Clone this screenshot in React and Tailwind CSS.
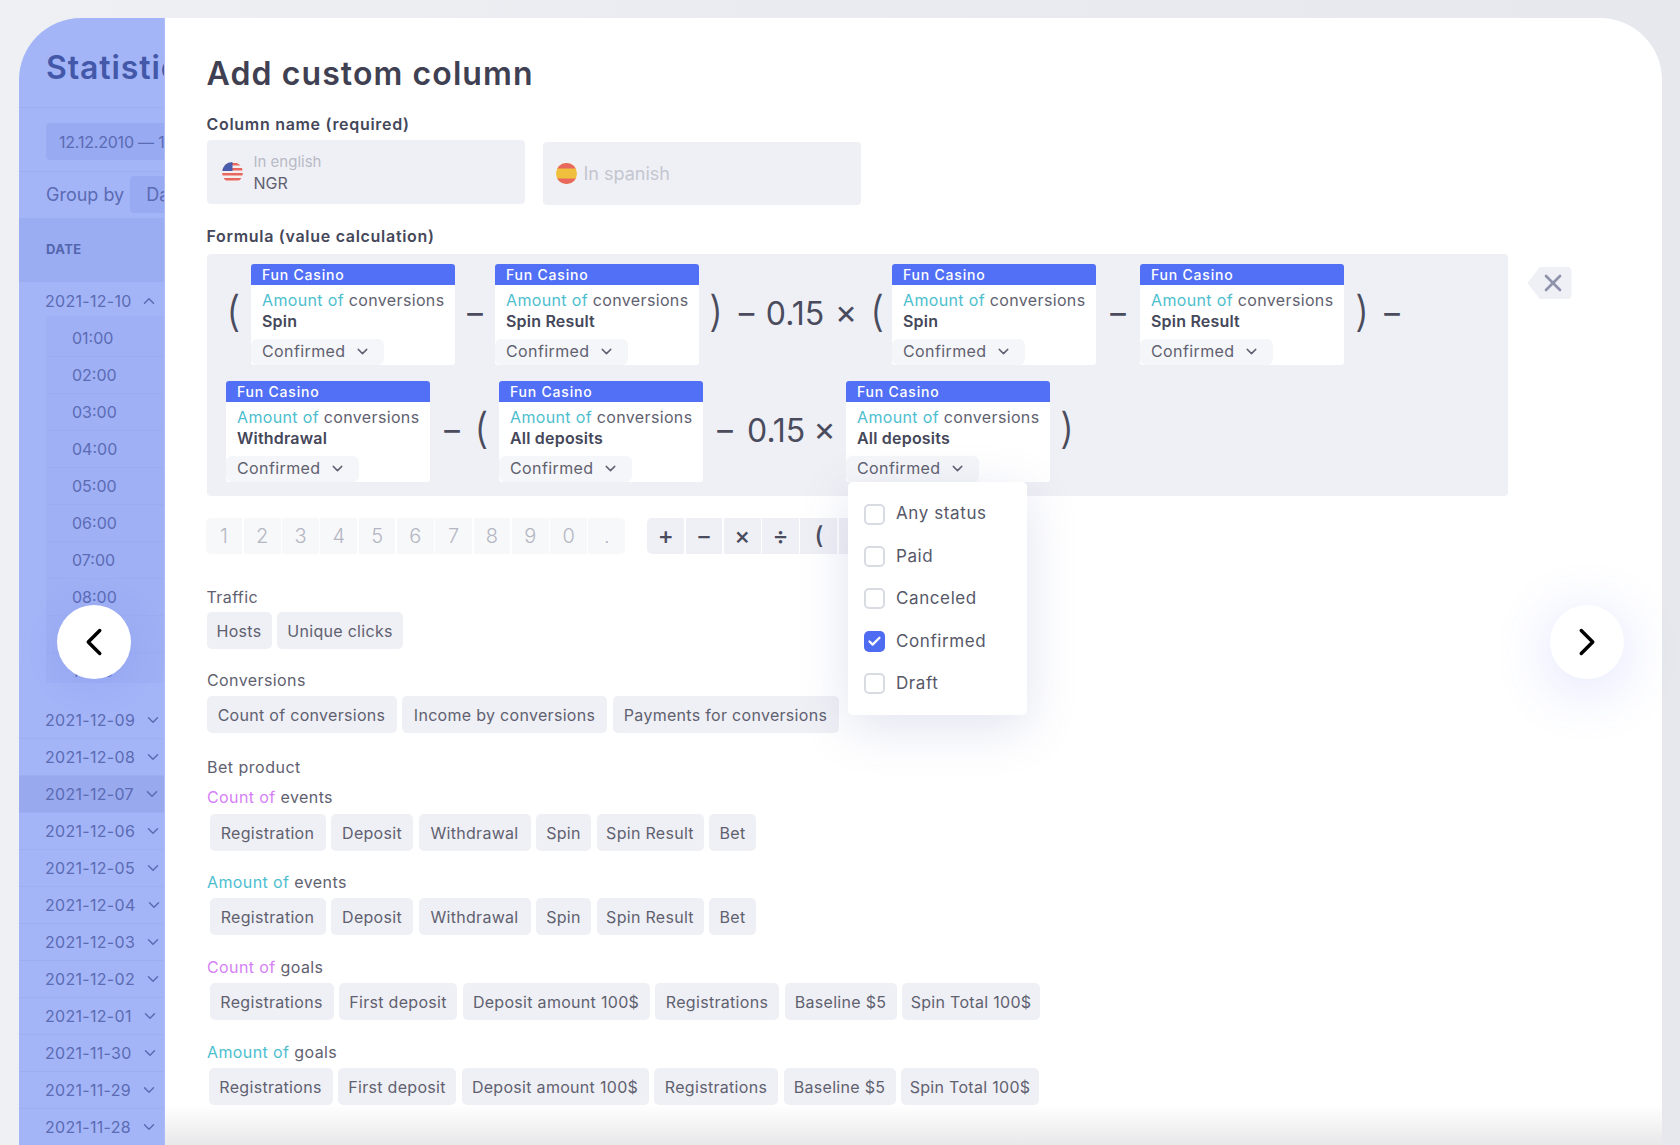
import { Check, ChevronDown, ChevronLeft, ChevronRight, ChevronUp, X } from 'lucide-react'

const font = "font-['Inter','Liberation_Sans',sans-serif]"

const hours = ['01:00', '02:00', '03:00', '04:00', '05:00', '06:00', '07:00', '08:00', '09:00', '10:00']
const days = [
	'2021-12-09',
	'2021-12-08',
	'2021-12-07',
	'2021-12-06',
	'2021-12-05',
	'2021-12-04',
	'2021-12-03',
	'2021-12-02',
	'2021-12-01',
	'2021-11-30',
	'2021-11-29',
	'2021-11-28',
]
const statuses = ['Any status', 'Paid', 'Canceled', 'Confirmed', 'Draft']

function Sidebar() {
	return (
		<div className="w-[146px] shrink-0 h-full overflow-hidden bg-[#a4b5f7] border-r border-[#adbcf8] text-[#5b6bb4]">
			<div className="h-[90px] border-b border-[#9dafF4] pl-[27px] pt-[30px] text-[32px] leading-[40px] font-semibold text-[#4358a8] whitespace-nowrap tracking-[0.9px]">
				Statistics
			</div>
			<div className="h-[64px] pl-[27px] pt-[15px] border-b border-[#9dafF4]">
				<div className="h-[37px] w-[200px] rounded bg-[#98aaf1] pl-[13px] flex items-center text-[16px] tracking-[-0.2px] whitespace-nowrap">
					12.12.2010 — 12.12.2021
				</div>
			</div>
			<div className="h-[46px] pl-[27px] flex items-start pt-[4px] gap-[6px]">
				<span className="text-[18px] leading-[37px] whitespace-nowrap">Group by</span>
				<div className="h-[37px] w-[90px] shrink-0 rounded bg-[#98aaf1] pl-[16px] flex items-center text-[18px]">
					Date
				</div>
			</div>
			<div className="h-[64px] bg-[#9badf2] pl-[27px] flex items-center text-[13px] font-bold tracking-[0.4px] text-[#5365ae]">
				DATE
			</div>
			<div className="h-[34px] pl-[26px] pt-[3px] flex items-center gap-[8px] text-[16px] tracking-[0.3px]">
				2021-12-10
				<ChevronUp size={18} />
			</div>
			<div className="ml-[27px] h-[367px] overflow-hidden bg-[#9fb0f4] pt-[4px]">
				{hours.map((hour) => (
					<div
						key={hour}
						className="h-[37px] pl-[26px] flex items-center text-[16px] border-b border-[#9badf1]"
					>
						{hour}
					</div>
				))}
			</div>
			<div className="mt-[19px]">
				{days.map((day) => (
					<div
						key={day}
						className={`h-[37px] pl-[26px] flex items-center gap-[9px] text-[16px] tracking-[0.3px] border-b border-[#9dafF4] ${
							day === '2021-12-07' ? 'bg-[#98a9ee]' : ''
						}`}
					>
						{day}
						<ChevronDown size={18} />
					</div>
				))}
			</div>
		</div>
	)
}

function Flag({ type }) {
	if (type === 'us') {
		return (
			<svg width="21" height="21" viewBox="0 0 21 21" className="shrink-0">
				<clipPath id="usflag">
					<circle cx="10.5" cy="10.5" r="10.5" />
				</clipPath>
				<g clipPath="url(#usflag)">
					<rect width="21" height="21" fill="#f4f0f0" />
					<rect y="1" width="21" height="2.5" fill="#e8685f" />
					<rect y="6" width="21" height="2.5" fill="#e8685f" />
					<rect y="11" width="21" height="2.5" fill="#e8685f" />
					<rect y="16" width="21" height="2.5" fill="#e8685f" />
					<rect width="10.5" height="9" fill="#4a5cae" />
				</g>
			</svg>
		)
	}
	return (
		<svg width="21" height="21" viewBox="0 0 21 21" className="shrink-0">
			<clipPath id="esflag">
				<circle cx="10.5" cy="10.5" r="10.5" />
			</clipPath>
			<g clipPath="url(#esflag)">
				<rect width="21" height="21" fill="#f0bf3e" />
				<rect width="21" height="5.5" fill="#e8685f" />
				<rect y="15.5" width="21" height="5.5" fill="#e8685f" />
			</g>
		</svg>
	)
}

function Card({ name, children }) {
	return (
		<div className="relative w-[204px] h-[101px] shrink-0 bg-white rounded-[3px]">
			<div className="h-[21px] bg-[#5270f5] rounded-t-[3px] pl-[11px] flex items-center text-[14px] font-medium tracking-[0.8px] text-white">
				Fun Casino
			</div>
			<div className="pl-[11px] pt-[5px] text-[16px] leading-[21px] tracking-[0.35px] text-[#5f6170] whitespace-nowrap">
				<div>
					<span className="text-[#4dbecf]">Amount of</span> conversions
				</div>
				<div className="font-semibold text-[#45475a] tracking-[0.2px]">{name}</div>
			</div>
			<div className="absolute left-0 bottom-0 h-[26px] w-[133px] bg-[#f5f6f9] rounded-[6px] pl-[11px] pb-[2px] flex items-center gap-[8px] text-[16px] tracking-[0.4px] text-[#5f6170]">
				Confirmed
				<ChevronDown size={17} />
			</div>
			{children}
		</div>
	)
}

function Op({ width, children }) {
	return (
		<div className={`${width} shrink-0 pb-[6px] text-center text-[34px] font-normal text-[#4a4c5e]`}>{children}</div>
	)
}

function Paren({ width, align, children }) {
	return (
		<div className={`${width} ${align} shrink-0 pb-[8px] text-[42px] leading-[48px] font-light text-[#4a4c5e]`}>
			{children}
		</div>
	)
}

function Number({ width }) {
	return (
		<div className={`${width} shrink-0 pb-[2px] text-center text-[32px] font-normal text-[#4a4c5e]`}>0.15</div>
	)
}

function Dropdown() {
	return (
		<div className="absolute left-[2px] top-full z-10 w-[179px] h-[233px] bg-white rounded-[5px] pl-[16px] pt-[11px] shadow-[0_12px_50px_rgba(90,100,170,0.18)]">
			{statuses.map((status) => (
				<div
					key={status}
					className="h-[42.4px] flex items-center gap-[11px] text-[17px] tracking-[0.6px] text-[#565868]"
				>
					{status === 'Confirmed' ? (
						<span className="w-[21px] h-[21px] rounded-[5px] bg-[#4e6cf2] flex items-center justify-center">
							<Check size={15} strokeWidth={3.5} className="text-white" />
						</span>
					) : (
						<span className="w-[21px] h-[21px] rounded-[5px] border-2 border-[#d9dbe3]" />
					)}
					{status}
				</div>
			))}
		</div>
	)
}

function Chip({ width, children }) {
	return (
		<div
			className={`${width} h-[37px] shrink-0 rounded-[5px] bg-[#eff0f5] flex items-center justify-center text-[16px] text-[#5f6170] whitespace-nowrap tracking-[0.3px]`}
		>
			{children}
		</div>
	)
}

function Label({ accent, color, rest }) {
	return (
		<div className="text-[16px] leading-[20px] tracking-[0.4px] pl-[0.5px] text-[#5f6170]">
			<span className={color}>{accent}</span> {rest}
		</div>
	)
}

function EventChips({ top }) {
	return (
		<div className={`flex gap-[5.5px] ml-[3px] ${top}`}>
			<Chip width="w-[116px]">Registration</Chip>
			<Chip width="w-[82px]">Deposit</Chip>
			<Chip width="w-[112px]">Withdrawal</Chip>
			<Chip width="w-[55px]">Spin</Chip>
			<Chip width="w-[107px]">Spin Result</Chip>
			<Chip width="w-[47px]">Bet</Chip>
		</div>
	)
}

function GoalChips({ offset }) {
	return (
		<div className={`flex gap-[5.5px] mt-[6px] ${offset}`}>
			<Chip width="w-[124px]">Registrations</Chip>
			<Chip width="w-[118px]">First deposit</Chip>
			<Chip width="w-[187px]">Deposit amount 100$</Chip>
			<Chip width="w-[124px]">Registrations</Chip>
			<Chip width="w-[112px]">Baseline $5</Chip>
			<Chip width="w-[138px]">Spin Total 100$</Chip>
		</div>
	)
}

function Main() {
	const digits = ['1', '2', '3', '4', '5', '6', '7', '8', '9', '0', '.']
	const ops = ['+', '−', '×', '÷', '(', ')']

	return (
		<div className="relative flex-1 h-full bg-white pl-[41.5px] pt-[36px]">
			<h1 className="text-[32px] leading-[40px] font-semibold tracking-[1.1px] text-[#3f4152]">Add custom column</h1>

			<div className="mt-[20px] text-[16px] leading-[20px] font-semibold tracking-[0.7px] text-[#45475a]">
				Column name (required)
			</div>
			<div className="flex items-start gap-[18px] mt-[6px]">
				<div className="w-[318px] h-[64px] bg-[#eff0f5] rounded-[4px] pl-[15px] flex items-center gap-[11px]">
					<Flag type="us" />
					<div className="pt-[2px]">
						<div className="text-[15px] leading-[20px] text-[#b8bac6]">In english</div>
						<div className="text-[16px] leading-[22px] text-[#5f6170]">NGR</div>
					</div>
				</div>
				<div className="w-[318px] h-[63px] mt-[2px] bg-[#eff0f5] rounded-[4px] pl-[13px] flex items-center gap-[7px]">
					<Flag type="es" />
					<span className="text-[18px] text-[#c4c6d0]">In spanish</span>
				</div>
			</div>

			<div className="mt-[21px] text-[16px] leading-[20px] font-semibold tracking-[0.7px] text-[#45475a]">
				Formula (value calculation)
			</div>
			<div className="flex items-start mt-[8px]">
				<div className="w-[1301px] h-[242px] bg-[#eff0f5] rounded-[4px] pl-[19.5px] pt-[10px]">
					<div className="flex items-center h-[101px]">
						<Paren width="w-[25px]" align="text-left">(</Paren>
						<Card name="Spin" />
						<Op width="w-[40px]">−</Op>
						<Card name="Spin Result" />
						<Paren width="w-[34px]" align="text-center">)</Paren>
						<Op width="w-[27px]">−</Op>
						<Number width="w-[70px]" />
						<Op width="w-[32px]">×</Op>
						<Paren width="w-[30px]" align="text-center">(</Paren>
						<Card name="Spin" />
						<Op width="w-[44px]">−</Op>
						<Card name="Spin Result" />
						<Paren width="w-[36px]" align="text-center">)</Paren>
						<Op width="w-[24px]">−</Op>
					</div>
					<div className="flex items-center h-[101px] mt-[16px]">
						<Card name="Withdrawal" />
						<Op width="w-[44px]">−</Op>
						<Paren width="w-[25px]" align="text-left">(</Paren>
						<Card name="All deposits" />
						<Op width="w-[44px]">−</Op>
						<Number width="w-[56px]" />
						<Op width="w-[43px]">×</Op>
						<Card name="All deposits">
							<Dropdown />
						</Card>
						<Paren width="w-[34px]" align="text-center">)</Paren>
					</div>
				</div>
				<div className="ml-[20px] mt-[13px] w-[44px] h-[32px] bg-[#eff0f5] pl-[11px] flex items-center text-[#8e93ab] [clip-path:polygon(28%_0,96%_0,100%_10%,100%_90%,96%_100%,28%_100%,0_50%)]">
					<X size={28} strokeWidth={2.3} />
				</div>
			</div>

			<div className="flex mt-[22px] -ml-[1px]">
				<div className="flex gap-[1.5px]">
					{digits.map((digit) => (
						<div
							key={digit}
							className="w-[36.8px] h-[36px] bg-[#f7f8fa] flex items-center justify-center text-[20px] font-light text-[#b4b6c2] first:rounded-l-[5px] last:rounded-r-[5px]"
						>
							{digit}
						</div>
					))}
				</div>
				<div className="flex gap-[1.5px] ml-[22px]">
					{ops.map((op) => (
						<div
							key={op}
							className="w-[36.8px] h-[36px] bg-[#eff0f5] flex items-center justify-center text-[24px] font-medium text-[#4a4c5e] first:rounded-l-[5px] last:rounded-r-[5px]"
						>
							{op}
						</div>
					))}
				</div>
			</div>

			<div className="mt-[33px] text-[16px] leading-[20px] tracking-[0.4px] text-[#5f6170]">Traffic</div>
			<div className="flex gap-[5.5px] mt-[5px]">
				<Chip width="w-[65px]">Hosts</Chip>
				<Chip width="w-[126px]">Unique clicks</Chip>
			</div>

			<div className="mt-[21px] text-[16px] leading-[20px] tracking-[0.4px] pl-[0.5px] text-[#5f6170]">Conversions</div>
			<div className="flex gap-[5.5px] mt-[6px]">
				<Chip width="w-[190px]">Count of conversions</Chip>
				<Chip width="w-[205px]">Income by conversions</Chip>
				<Chip width="w-[226px]">Payments for conversions</Chip>
			</div>

			<div className="mt-[24px] text-[16px] leading-[20px] tracking-[0.5px] pl-[0.5px] text-[#5f6170]">Bet product</div>
			<div className="mt-[10px]">
				<Label accent="Count of" color="text-[#d580f5]" rest="events" />
			</div>
			<EventChips top="mt-[7px]" />
			<div className="mt-[21px]">
				<Label accent="Amount of" color="text-[#4dbecf]" rest="events" />
			</div>
			<EventChips top="mt-[6px]" />
			<div className="mt-[22px]">
				<Label accent="Count of" color="text-[#d580f5]" rest="goals" />
			</div>
			<GoalChips offset="ml-[3px]" />
			<div className="mt-[22px]">
				<Label accent="Amount of" color="text-[#4dbecf]" rest="goals" />
			</div>
			<GoalChips offset="ml-[2px]" />

			<div className="absolute left-0 right-0 bottom-0 h-[40px] bg-linear-to-b from-white to-[#e8e8ea]" />
		</div>
	)
}

export default function App() {
	return (
		<div
			className={`relative w-[1680px] h-[1145px] overflow-hidden bg-linear-to-r from-[#eff0f4] via-[#e9ebf0] to-[#e6e8ed] pt-[18px] pl-[19px] pr-[18px] ${font}`}
		>
			<div className="flex h-full rounded-t-[62px] overflow-hidden">
				<Sidebar />
				<Main />
			</div>
			<button className="absolute left-[57px] top-[605px] w-[74px] h-[74px] rounded-full bg-white flex items-center justify-center text-black shadow-[0_8px_40px_rgba(80,100,240,0.15)]">
				<ChevronLeft size={46} strokeWidth={1.8} />
			</button>
			<button className="absolute left-[1550px] top-[605px] w-[74px] h-[74px] rounded-full bg-white flex items-center justify-center text-black shadow-[0_10px_60px_rgba(80,100,240,0.2)]">
				<ChevronRight size={46} strokeWidth={1.8} />
			</button>
		</div>
	)
}
